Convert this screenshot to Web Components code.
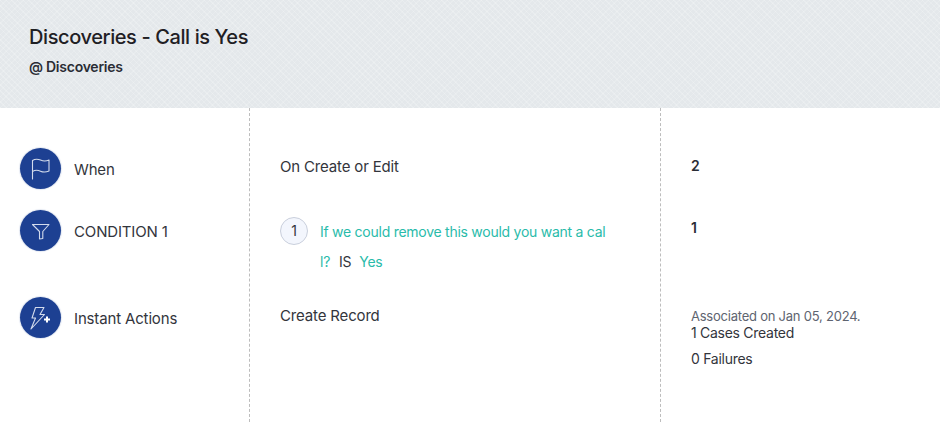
<!DOCTYPE html>
<html>
<head>
<meta charset="utf-8">
<title>Discoveries - Call is Yes</title>
<style>
  html, body { margin: 0; background: #fff; }
  body { font-family: "Inter", "Liberation Sans", sans-serif; color: #2f3138; }
</style>
</head>
<body>
<rule-page>
  <rule-header slot="header" title-text="Discoveries - Call is Yes" sub-text="@ Discoveries"></rule-header>

  <rule-column slot="left" width="249" pad="40">
    <step-label icon="flag" h="62">When</step-label>
    <step-label icon="filter" h="87">CONDITION 1</step-label>
    <step-label icon="bolt" h="42">Instant Actions</step-label>
  </rule-column>

  <rule-column slot="middle" width="411" pad="49" dashed>
    <mid-cell h="47">On Create or Edit</mid-cell>
    <condition-row num="1" line-one="If we could remove this would you want a cal" line-two="l?" value="Yes"></condition-row>
    <mid-cell h="30">Create Record</mid-cell>
  </rule-column>

  <rule-column slot="right" width="280" pad="48" dashed>
    <count-cell h="62">2</count-cell>
    <count-cell h="90">1</count-cell>
    <result-block date="Associated on Jan 05, 2024." created="1 Cases Created" failed="0 Failures"></result-block>
  </rule-column>
</rule-page>

<script>
const ICONS = {
  flag: `<path d="M12.500 31V12.500c2.500-1.600 5.500-1.500 8-.4s5.500 1.300 8.500-.1V23c-3 1.300-6 1.300-8.500.2s-5.500-1.200-8 .3" />`,
  filter: `<path d="M12.500 14.500H29L22.800 21.500V28.500L19.500 29V21.500z" />`,
  bolt: `<path d="M15.500 10.500H24l-4 7h4.500L11 32l4.500-11h-3.500z" /><path d="M27 19.500v6M24 22.500h6" stroke="#fff" stroke-width="2" stroke-linecap="butt" />`
};

class RulePage extends HTMLElement {
  constructor() {
    super();
    this.attachShadow({ mode: "open" });
    this.shadowRoot.innerHTML = `
    <style>
      :host { display: block; width: 940px; height: 434px; overflow: hidden; }
      .cols { display: flex; height: 314px; }
    </style>
    <slot name="header"></slot>
    <div class="cols">
      <slot name="left"></slot>
      <slot name="middle"></slot>
      <slot name="right"></slot>
    </div>`;
  }
}

class RuleHeader extends HTMLElement {
  constructor() {
    super();
    this.attachShadow({ mode: "open" });
    this.shadowRoot.innerHTML = `
    <style>
      :host {
        display: block; height: 108px; box-sizing: border-box; padding: 24px 29px 0;
        background-color: #e4e8eb;
        background-image:
          repeating-linear-gradient(45deg, rgba(255,255,255,.2) 0 1px, transparent 1px 4px),
          repeating-linear-gradient(-45deg, rgba(255,255,255,.16) 0 1px, transparent 1px 4px);
      }
      h1 { margin: 0; font-size: 20px; line-height: 26px; font-weight: 500; color: #1f2024; letter-spacing: -.4px; }
      p { margin: 7px 0 0; font-size: 14px; line-height: 20px; font-weight: 600; color: #2a2d35; letter-spacing: -.25px; }
    </style>
    <h1>${this.getAttribute("title-text")}</h1>
    <p>${this.getAttribute("sub-text")}</p>`;
  }
}

class RuleColumn extends HTMLElement {
  constructor() {
    super();
    this.attachShadow({ mode: "open" });
    const dashed = this.hasAttribute("dashed");
    this.shadowRoot.innerHTML = `
    <style>
      :host {
        display: block; box-sizing: border-box; flex: none;
        width: ${this.getAttribute("width")}px;
        padding-top: ${this.getAttribute("pad")}px;
        ${dashed ? "border-left: 1px dashed #bdbdbd;" : ""}
      }
    </style>
    <slot></slot>`;
  }
}

class StepLabel extends HTMLElement {
  constructor() {
    super();
    this.attachShadow({ mode: "open" });
    this.shadowRoot.innerHTML = `
    <style>
      :host { display: flex; align-items: flex-start; gap: 13px; height: ${this.getAttribute("h")}px; padding-left: 20px; }
      .dot { width: 41px; height: 41px; border-radius: 50%; background: #1d4092; flex: none; box-shadow: 0 0 1px 1px #e3e8f2; }
      svg { display: block; fill: none; stroke: #d3dbec; stroke-width: 1.100; stroke-linejoin: round; stroke-linecap: round; }
      .txt { font-size: 15px; line-height: 44px; color: #33353c; letter-spacing: -.15px; }
    </style>
    <div class="dot"><svg width="41" height="41" viewBox="0 0 41 41">${ICONS[this.getAttribute("icon")]}</svg></div>
    <div class="txt"><slot></slot></div>`;
  }
}

class MidCell extends HTMLElement {
  constructor() {
    super();
    this.attachShadow({ mode: "open" });
    this.shadowRoot.innerHTML = `
    <style>
      :host { display: block; height: ${this.getAttribute("h")}px; padding-left: 30px; font-size: 15px; line-height: 20px; color: #33353c; letter-spacing: -.16px; }
    </style>
    <slot></slot>`;
  }
}

class ConditionRow extends HTMLElement {
  constructor() {
    super();
    this.attachShadow({ mode: "open" });
    this.shadowRoot.innerHTML = `
    <style>
      :host { display: flex; align-items: flex-start; gap: 12px; height: 102px; padding-left: 30px; box-sizing: border-box; padding-top: 13px; }
      .num { width: 28px; height: 28px; box-sizing: border-box; flex: none; border: 1px solid #c9cfdc; border-radius: 50%; background: #f3f6fd; font-size: 14px; line-height: 26px; text-align: center; color: #33353c; }
      .body { font-size: 14px; line-height: 30px; color: #2abbaa; letter-spacing: -.26px; white-space: nowrap; }
      .two { display: flex; gap: 8px; }
      .two span:first-child { margin-right: 1px; }
      .is { color: #33353c; }
    </style>
    <div class="num">${this.getAttribute("num")}</div>
    <div class="body">
      <div>${this.getAttribute("line-one")}</div>
      <div class="two"><span>${this.getAttribute("line-two")}</span><span class="is">IS</span><span>${this.getAttribute("value")}</span></div>
    </div>`;
  }
}

class CountCell extends HTMLElement {
  constructor() {
    super();
    this.attachShadow({ mode: "open" });
    this.shadowRoot.innerHTML = `
    <style>
      :host { display: block; height: ${this.getAttribute("h")}px; padding-left: 30px; font-size: 14px; line-height: 20px; font-weight: 600; color: #2a2d35; }
    </style>
    <slot></slot>`;
  }
}

class ResultBlock extends HTMLElement {
  constructor() {
    super();
    this.attachShadow({ mode: "open" });
    this.shadowRoot.innerHTML = `
    <style>
      :host { display: block; padding-left: 30px; font-size: 14px; color: #33353c; letter-spacing: -.28px; }
      .date { font-size: 13px; line-height: 16px; color: #5e6470; letter-spacing: -.23px; }
      .line { line-height: 18px; }
      .fail { line-height: 18px; margin-top: 8px; }
    </style>
    <div class="date">${this.getAttribute("date")}</div>
    <div class="line">${this.getAttribute("created")}</div>
    <div class="fail">${this.getAttribute("failed")}</div>`;
  }
}

customElements.define("rule-page", RulePage);
customElements.define("rule-header", RuleHeader);
customElements.define("rule-column", RuleColumn);
customElements.define("step-label", StepLabel);
customElements.define("mid-cell", MidCell);
customElements.define("condition-row", ConditionRow);
customElements.define("count-cell", CountCell);
customElements.define("result-block", ResultBlock);
</script>
</body>
</html>
